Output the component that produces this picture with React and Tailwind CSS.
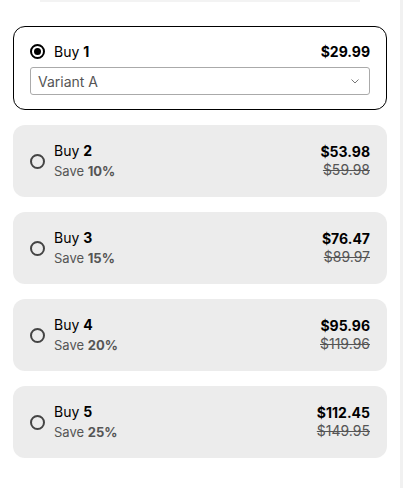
import React from "react";

const tiers = [
  { n: 2, save: "10%", price: "$53.98", old: "$59.98" },
  { n: 3, save: "15%", price: "$76.47", old: "$89.97" },
  { n: 4, save: "20%", price: "$95.96", old: "$119.96" },
  { n: 5, save: "25%", price: "$112.45", old: "$149.95" },
];

export default function App() {
  return (
    <div className="flex w-[403px] h-[488px] bg-white" style={{ fontFamily: "Inter, 'Noto Sans', sans-serif" }}>
      <div className="w-[400px] flex flex-col">
        <div className="mx-[40px] h-[2px] bg-[#f3f3f3]" />
        <div className="flex flex-col gap-[15px] px-[13px] pt-[24px]">
          <div className="border border-black rounded-[12px] px-[16px] pt-[14px] pb-[14px] flex flex-col gap-[6px]">
            <div className="flex items-center justify-between h-[20px]">
              <div className="flex items-center gap-[9px]">
                <div className="w-[15px] h-[15px] rounded-full border-[2px] border-black flex items-center justify-center">
                  <div className="w-[7px] h-[7px] rounded-full bg-black" />
                </div>
                <span className="text-[14px] text-black">
                  Buy <b className="font-bold">1</b>
                </span>
              </div>
              <span className="text-[14px] font-bold text-black">$29.99</span>
            </div>
            <div className="h-[28px] border border-[#aaaaaa] rounded-[3px] flex items-center justify-between pl-[7px] pr-[10px]">
              <span className="text-[14px] text-[#555]">Variant A</span>
              <svg width="8" height="5" viewBox="0 0 8 5" fill="none">
                <path d="M0.5 0.5 L4 4 L7.5 0.5" stroke="#777" strokeWidth="1" />
              </svg>
            </div>
          </div>
          {tiers.map((t) => (
            <div key={t.n} className="bg-[#ececec] rounded-[12px] h-[72px] px-[17px] flex items-center justify-between">
              <div className="flex items-center gap-[9px]">
                <div className="w-[15px] h-[15px] rounded-full border-[2px] border-[#444]" />
                <div className="flex flex-col">
                  <span className="text-[14px] leading-[20px] text-black">
                    Buy <b className="font-bold">{t.n}</b>
                  </span>
                  <span className="text-[13px] leading-[20px] text-[#555]">
                    Save <b className="font-bold">{t.save}</b>
                  </span>
                </div>
              </div>
              <div className="flex flex-col items-end">
                <span className="text-[14px] leading-[18px] font-bold text-black">{t.price}</span>
                <span className="text-[14px] leading-[18px] text-[#555] line-through">{t.old}</span>
              </div>
            </div>
          ))}
        </div>
      </div>
      <div className="flex-1 bg-[#f1f1f1]" />
    </div>
  );
}
